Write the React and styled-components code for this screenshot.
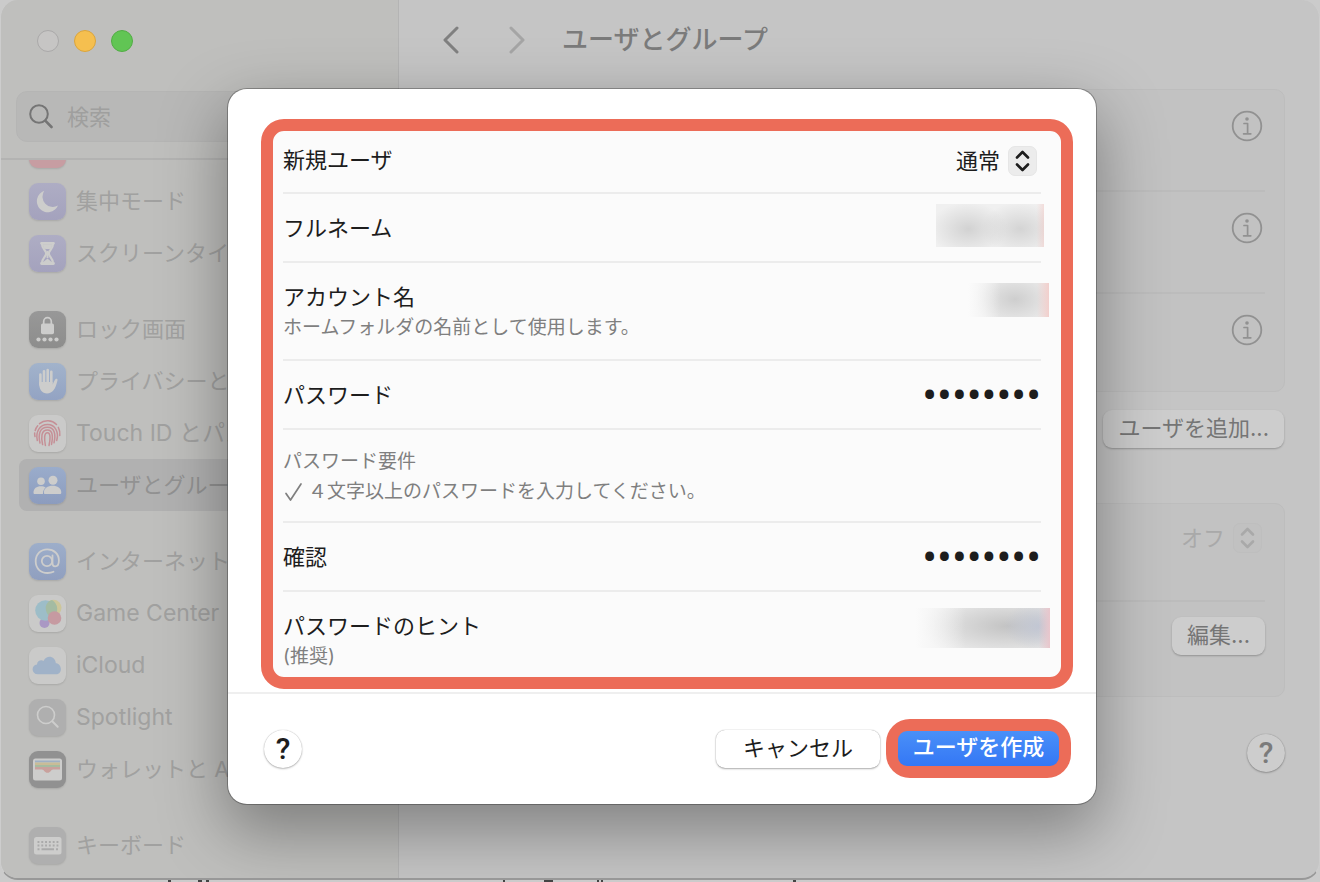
import { useState } from 'react';
import styled, { createGlobalStyle } from 'styled-components';

const GlobalStyle = createGlobalStyle`
    * {
        box-sizing: border-box;
    }

    body {
        margin: 0;
        background: #cbcbcb;
        font-family: Inter, "Noto Sans CJK JP", sans-serif;
        font-size: 22px;
    }

    button, input, select {
        font: inherit;
        color: inherit;
        margin: 0;
    }
`;

const Desktop = styled.div`
    height: 100vh;
    display: flex;
    flex-direction: column;
    overflow: hidden;
`;

const Window = styled.div`
    position: relative;
    flex: 1;
    min-height: 0;
    display: flex;
    border: 1px solid #b0b0b0;
    border-width: 0 1px 2px;
    border-color: #cdcdcd #cdcdcd #989898;
    border-radius: 18px;
    overflow: hidden;
    background: #c5c5c5;
`;

const PageBehind = styled.div`
    height: 2px;

    svg {
        display: block;
    }
`;

/* Sidebar */

const Sidebar = styled.aside`
    width: 398px;
    flex-shrink: 0;
    display: flex;
    flex-direction: column;
    background: #bfbfbd;
    border-right: 1px solid #b4b4b4;
`;

const SidebarTop = styled.div`
    padding: 30px 18px 16px 15px;
    border-bottom: 2px solid #b3b3b2;
`;

const Lights = styled.div`
    display: flex;
    gap: 15px;
    padding-left: 21px;
    margin-bottom: 39px;
`;

const Light = styled.button`
    width: 22px;
    height: 22px;
    padding: 0;
    border-radius: 50%;
    background: ${({ $fill }) => $fill};
    border: 1px solid ${({ $edge }) => $edge};
`;

const SearchBox = styled.label`
    display: flex;
    align-items: center;
    gap: 14px;
    height: 51px;
    padding: 0 12px;
    border: 1px solid #b5b5b4;
    border-radius: 11px;
    background: #b8b8b7;
    color: #757575;

    svg {
        flex-shrink: 0;
    }

    input {
        flex: 1;
        min-width: 0;
        padding: 0;
        border: 0;
        outline: 0;
        background: none;
    }

    input::placeholder {
        color: #9f9f9e;
        opacity: 1;
    }
`;

const SidebarScroll = styled.nav`
    flex: 1;
    min-height: 0;
    overflow: hidden;
    padding: 0 18px;
`;

const NavGroups = styled.div`
    display: flex;
    flex-direction: column;
    gap: 24px;
    margin-top: -37px;
`;

const NavGroup = styled.div`
    display: flex;
    flex-direction: column;
`;

const NavItem = styled.a`
    display: flex;
    align-items: center;
    gap: 10px;
    height: 52px;
    padding-left: 10px;
    border-radius: 8px;
    color: ${({ $selected }) => ($selected ? '#929292' : '#a1a1a0')};
    background: ${({ $selected }) => ($selected ? '#b1b1b1' : 'transparent')};
    text-decoration: none;
    white-space: nowrap;
    font-size: ${({ $latin }) => ($latin ? 23 : 22)}px;
    line-height: 32px;
`;

const Tile = styled.span`
    display: block;
    width: 37px;
    height: 37px;
    flex-shrink: 0;
    border-radius: 9px;
    background: ${({ $fill }) => $fill};
    box-shadow: 0 1px 2px rgba(0, 0, 0, 0.12);

    svg {
        display: block;
    }
`;

/* Settings pane behind the sheet */

const Pane = styled.main`
    flex: 1;
    min-width: 0;
    display: flex;
    flex-direction: column;
    padding: 0 34px 0 19px;
    color: #757575;
`;

const PaneHeader = styled.header`
    display: flex;
    align-items: center;
    height: 80px;
    padding-left: 20px;
    margin-bottom: 9px;
`;

const Arrows = styled.div`
    display: flex;
    gap: 43px;
    margin-right: 33px;
`;

const ArrowButton = styled.button`
    display: grid;
    place-items: center;
    width: 24px;
    height: 32px;
    padding: 0;
    border: 0;
    background: none;
    color: ${({ disabled }) => (disabled ? '#a5a5a5' : '#808080')};
`;

const PaneTitle = styled.h1`
    margin: 0;
    font-size: 26px;
    line-height: 36px;
    font-weight: 500;
    color: #7b7b7b;
`;

const Box = styled.section`
    padding: 0 19px;
    border: 1px solid #bdbdbd;
    border-radius: 10px;
    background: #c2c2c2;
`;

const BoxRow = styled.div`
    display: flex;
    justify-content: flex-end;
    align-items: flex-start;
    height: ${({ $height }) => $height}px;
    padding: ${({ $top }) => $top}px 0 0;

    & + & {
        border-top: 2px solid #bcbcbc;
    }
`;

const InfoButton = styled.button`
    display: block;
    padding: 0;
    margin-right: 2px;
    border: 0;
    background: none;
    color: #919191;

    svg {
        display: block;
    }
`;

const ButtonLine = styled.div`
    display: flex;
    justify-content: flex-end;
    padding: 18px 1px 55px 0;
`;

const DimButton = styled.button`
    height: 38px;
    padding: 0 15px 2px;
    border: 0;
    border-radius: 9px;
    background: #cdcdcd;
    box-shadow: 0 1px 2px rgba(0, 0, 0, 0.25);
    line-height: 34px;
    white-space: nowrap;
`;

const HelpButton = styled.button`
    width: 38px;
    height: 38px;
    padding: 0;
    border: 0;
    border-radius: 50%;
    background: ${({ $dim }) => ($dim ? '#cdcdcd' : '#fff')};
    color: ${({ $dim }) => ($dim ? '#7b7b7b' : '#1d1d1d')};
    box-shadow: 0 0 1px rgba(0, 0, 0, 0.3), 0 1px 2px rgba(0, 0, 0, 0.25);
    font-family: Roboto, sans-serif;
    font-size: 30px;
    font-weight: 500;
    line-height: 38px;
`;

const PaneHelp = styled.div`
    display: flex;
    justify-content: flex-end;
    padding-top: 37px;
`;

/* Pop-up select */

const PopUp = styled.span`
    position: relative;
    display: flex;
    align-items: center;
    margin-right: ${({ $dim }) => ($dim ? 3 : 4)}px;
    color: ${({ $dim }) => ($dim ? '#a9a9a9' : '#1d1d1d')};

    select {
        appearance: none;
        padding: 0 36px 0 0;
        border: 0;
        outline: 0;
        background: none;
        line-height: 32px;
        height: 32px;
        opacity: 1;
    }
`;

const PopUpArrows = styled.span`
    position: absolute;
    right: 0;
    display: grid;
    place-items: center;
    width: 29px;
    height: 30px;
    border: 1px solid ${({ $dim }) => ($dim ? '#bebebe' : '#e6e6e6')};
    border-radius: 7px;
    background: ${({ $dim }) => ($dim ? '#c1c1c1' : '#ececec')};
    pointer-events: none;
`;

/* Sheet */

const SheetLayer = styled.div`
    position: absolute;
    inset: 0;
    display: flex;
    padding: 89px 223px 74px 227px;
`;

const Sheet = styled.form`
    flex: 1;
    display: flex;
    flex-direction: column;
    border-radius: 19px;
    background: #fff;
    color: #1d1d1d;
    box-shadow: 0 0 0 1px rgba(0, 0, 0, 0.28), 0 24px 64px 4px rgba(0, 0, 0, 0.34);
`;

const SheetBody = styled.div`
    padding: 30px 23px 3px 33px;
    border-bottom: 2px solid #efefef;
`;

const Fields = styled.div`
    padding: 0 20px 0 10px;
    border: 12px solid #ec6c58;
    border-radius: 23px;
    background: #fbfbfb;
`;

const Field = styled.div`
    position: relative;
    display: flex;
    justify-content: space-between;
    padding: ${({ $pad }) => $pad || '19px 0 17px'};

    & + & {
        border-top: 2px solid #ececec;
    }
`;

const FieldText = styled.div`
    display: flex;
    flex-direction: column;
    flex-shrink: 0;

    label {
        line-height: 31px;
    }
`;

const Hint = styled.span`
    display: flex;
    align-items: center;
    gap: 5px;
    font-size: 19px;
    line-height: 30px;
    color: #7f7f7f;
`;

const TextInput = styled.input`
    width: 240px;
    height: 31px;
    padding: 0;
    border: 0;
    outline: 0;
    background: none;
    text-align: right;
`;

const PasswordInput = styled(TextInput)`
    font-family: Roboto, sans-serif;
    font-size: 44px;
    line-height: 31px;
`;

const Smudge = styled.span`
    position: absolute;
    top: ${({ $top }) => $top}px;
    right: ${({ $right }) => $right}px;
    width: ${({ $width }) => $width}px;
    height: ${({ $height }) => $height}px;
    background: ${({ $fill }) => $fill};
    pointer-events: none;
`;

const SheetFooter = styled.div`
    flex: 1;
    display: flex;
    align-items: flex-start;
    padding: 25px 25px 0 36px;

    ${HelpButton} {
        margin: 11px auto 0 0;
    }
`;

const CancelButton = styled.button`
    width: 164px;
    height: 38px;
    margin: 11px 6px 0 0;
    padding: 0 0 2px;
    border: 0;
    border-radius: 9px;
    background: #fff;
    box-shadow: 0 0 1px rgba(0, 0, 0, 0.4), 0 1px 2px rgba(0, 0, 0, 0.3);
    line-height: 34px;
`;

const CreateRing = styled.div`
    padding: 12px;
    border-radius: 24px;
    background: #ec6c58;
`;

const CreateButton = styled.button`
    display: block;
    width: 161px;
    height: 35px;
    padding: 0 0 2px;
    border: 0;
    border-radius: 9px;
    background: linear-gradient(#4a90f8, #3477f5);
    color: #fff;
    font-weight: 500;
    line-height: 33px;
`;

/* Icons */

const ArrowsIcon = () => (
    <svg width="15" height="22" viewBox="0 0 15 22" fill="none" stroke="currentColor" strokeWidth="2.6" strokeLinecap="round" strokeLinejoin="round">
        <path d="M2 7.5 7.5 2 13 7.5M2 14.5 7.5 20 13 14.5" />
    </svg>
);

const InfoIcon = () => (
    <svg width="32" height="32" viewBox="0 0 32 32" fill="none" stroke="currentColor">
        <circle cx="16" cy="16" r="14.3" strokeWidth="1.8" />
        <circle cx="16" cy="9" r="1.8" fill="currentColor" stroke="none" />
        <path d="M13 13.5h3.6v10M12.6 23.8h7.2" strokeWidth="1.7" strokeLinecap="round" strokeLinejoin="round" />
    </svg>
);

const CheckIcon = () => (
    <svg width="20" height="20" viewBox="0 0 20 20" fill="none" stroke="currentColor" strokeWidth="1.7" strokeLinecap="round" strokeLinejoin="round">
        <path d="M3 11.5 7.5 18 18 2" />
    </svg>
);

const Glyph = ({ children }) => (
    <svg width="37" height="37" viewBox="0 0 37 37" fill="#cdcdcc">
        {children}
    </svg>
);

const icons = {
    sound: {
        fill: '#c79da2',
        glyph: <path d="M8 15h5l6-5v17l-6-5H8zM23 13q4 5.500 0 11v-2q2-3.500 0-7z" />
    },
    moon: {
        fill: 'linear-gradient(#aeadc4, #a4a2bd)',
        glyph: <path d="M15.300 7.800A11 11 0 1 0 29 22.500 10.300 10.300 0 0 1 15.300 7.800Z" />
    },
    hourglass: {
        fill: 'linear-gradient(#aeadc4, #a4a2bd)',
        glyph: (
            <g fill="none" stroke="#cdcdcc">
                <path d="M12.500 8.300h12M12.500 28.500h12" strokeWidth="2.800" strokeLinecap="round" />
                <path d="M13 9c0 5.500 4.200 6.200 4.200 9.400S13 23 13 28M24 9c0 5.500-4.200 6.200-4.200 9.400S24 23 24 28" strokeWidth="2.200" />
                <path d="M14 9.500h9c0 2.500-.7 3.500-1.500 4.200-2 .5-3.500.5-6 0-.8-.7-1.500-1.700-1.500-4.200ZM14 28c.4-2 2.800-2.800 4.500-4.500 1.700 1.700 4.100 2.500 4.500 4.500Z" fill="#cdcdcc" stroke="none" />
                <path d="M18.500 16v7" strokeWidth="1.800" />
            </g>
        )
    },
    lock: {
        fill: 'linear-gradient(#989898, #8d8d8c)',
        glyph: (
            <>
                <rect x="12" y="12.500" width="13" height="10.800" rx="1.800" />
                <path d="M14.700 13v-2.500a3.800 3.800 0 0 1 7.600 0V13" fill="none" stroke="#cdcdcc" strokeWidth="1.700" />
                <circle cx="9.500" cy="28.500" r="2.100" />
                <circle cx="15.500" cy="28.500" r="2.100" />
                <circle cx="21.500" cy="28.500" r="2.100" />
                <circle cx="27.500" cy="28.500" r="2.100" />
            </>
        )
    },
    hand: {
        fill: 'linear-gradient(#a2b3cb, #93a3c3)',
        glyph: (
            <>
                <g fill="none" stroke="#cdcdcc" strokeWidth="2.600" strokeLinecap="round">
                    <path d="M11.400 11.500v10M15 8.200V20M18.700 7V20M22.300 8.800V20" />
                </g>
                <path d="M10.100 19h13.500v2.600c1-2.300 2-4.700 3-5.600.9-.7 2.200-.2 1.900 1.200-.8 3.800-2 7.500-4 10-2.700 4-9.500 4.400-12.500.2-1.600-2.400-1.900-5-1.900-8.400Z" />
            </>
        )
    },
    touch: {
        fill: '#cacac9',
        glyph: (
            <g fill="none" stroke="#c58f96" strokeWidth="1.500" strokeLinecap="round">
                <path d="M10.500 8.700a12.800 12.800 0 0 1 17 .8M6.200 15.500a12.400 12.400 0 0 1 2.500-4.700M29.300 12.300a14 14 0 0 1 1.500 8.200M6 21.500q-.5-1.800-.3-3.500" />
                <path d="M8.300 25.500C6.300 16.500 11 9.600 18.500 9.600c8 0 11.500 7.800 9.200 15.900" />
                <path d="M11 28c-2-8.500-.5-15.700 7.500-15.700 7 0 8.500 7 6.500 15.500" />
                <path d="M13.600 29.600c-1.500-6.500-1.800-14.600 4.900-14.600 5.500 0 5.500 7 4 14.400" />
                <path d="M16.400 30.500c-1-6-1.700-12.800 2.100-12.800 3.500 0 2.700 7 1.500 12.800" />
            </g>
        )
    },
    users: {
        fill: 'linear-gradient(#9aaccb, #8c9cbe)',
        glyph: (
            <>
                <circle cx="12" cy="14.300" r="3.800" />
                <path d="M4.500 25.800c0-4.500 3-6.600 7.400-6.600 2 0 3.600.4 4.800 1.300-1.700 1.300-2.700 3.200-2.800 6.600H5.700c-.8 0-1.200-.5-1.200-1.300Z" />
                <circle cx="24" cy="13.300" r="4.500" />
                <path d="M14.900 25.600c0-4.600 3.900-6.800 8.700-6.800s8.700 2.200 8.700 6.800c0 1-.5 1.500-1.400 1.500H16.300c-.9 0-1.400-.5-1.400-1.500Z" />
            </>
        )
    },
    at: {
        fill: 'linear-gradient(#9daeca, #909fbf)',
        glyph: (
            <g fill="none" stroke="#cdcdcc" strokeWidth="1.800" strokeLinecap="round">
                <circle cx="18" cy="18" r="5.200" />
                <path d="M23.500 12.500v7.700c0 2 1 3.200 2.600 3.200 2.200 0 3.800-2.200 3.800-5.900 0-6.600-4.900-11.100-11.600-11.100S6.700 11.200 6.700 18.300 11.500 30 18.600 30c2.200 0 4.200-.4 5.900-1.200" />
            </g>
        )
    },
    game: {
        fill: '#cacac9',
        glyph: (
            <>
                <circle cx="15.500" cy="28" r="5" fill="#aa98c4" />
                <circle cx="24.500" cy="12.800" r="8" fill="#cdc69a" />
                <circle cx="16.500" cy="15.500" r="10.300" fill="#9dbdc8" />
                <path d="M17 15.500a8 8 0 0 1 6-10.400 10.300 10.300 0 0 1 1.500 16.900 8 8 0 0 1-7.500-6.500Z" fill="#a4bba2" />
                <circle cx="25.500" cy="23" r="6.800" fill="#c69aa1" />
            </>
        )
    },
    cloud: {
        fill: '#cacac9',
        glyph: <path d="M9 27.300c-7 0-7-9.300-1-9.800.2-4 4.500-5 6.500-3.500 3.500-7 12-4.500 12.300 2.200 6 0 7.500 11.100.2 11.100Z" fill="#a0b2c8" />
    },
    spotlight: {
        fill: '#afafaf',
        glyph: (
            <g fill="none" stroke="#cdcdcc" strokeLinecap="round">
                <circle cx="17" cy="16" r="8.500" strokeWidth="1.600" />
                <path d="m23.500 22.500 5.200 5.300" strokeWidth="2" />
            </g>
        )
    },
    wallet: {
        fill: '#919191',
        glyph: (
            <>
                <rect x="4" y="7.500" width="29" height="22" rx="2.500" />
                <path d="M6 9.500h25v2H6z" fill="#9fb0c4" />
                <path d="M6 11.500h25v2.500H6z" fill="#c9bc97" />
                <path d="M6 14h25v2H6z" fill="#a6bba0" />
                <path d="M6 16h25v2.500h-7c-2 0-2.500 3.300-5.500 3.300s-3.500-3.300-5.500-3.300H6z" fill="#c9a19d" />
            </>
        )
    },
    keyboard: {
        fill: '#afafaf',
        glyph: (
            <>
                <rect x="5" y="10" width="27.500" height="17.500" rx="2.500" />
                <path d="M8.500 15h21M8.500 18.500h21" stroke="#aaa" strokeWidth="1.900" strokeDasharray="1.900 1.900" />
                <path d="M8.500 22.300h2M12.500 22.300h12.500M27 22.300h2" stroke="#aaa" strokeWidth="1.900" />
            </>
        )
    },
    blank: { fill: '#afafaf', glyph: null }
};

const groups = [
    [
        { icon: 'sound', label: 'サウンド' },
        { icon: 'moon', label: '集中モード' },
        { icon: 'hourglass', label: 'スクリーンタイム' }
    ],
    [
        { icon: 'lock', label: 'ロック画面' },
        { icon: 'hand', label: 'プライバシーとセキュリティ' },
        { icon: 'touch', label: 'Touch ID とパスワード', latin: true },
        { icon: 'users', label: 'ユーザとグループ' }
    ],
    [
        { icon: 'at', label: 'インターネットアカウント' },
        { icon: 'game', label: 'Game Center', latin: true },
        { icon: 'cloud', label: 'iCloud', latin: true },
        { icon: 'spotlight', label: 'Spotlight', latin: true },
        { icon: 'wallet', label: 'ウォレットと Apple Pay' }
    ],
    [
        { icon: 'keyboard', label: 'キーボード' },
        { icon: 'blank', label: '' }
    ]
];

const smudges = {
    name: 'linear-gradient(90deg, transparent 93%, rgba(245, 190, 185, 0.4)), radial-gradient(ellipse 36% 62% at 30% 58%, #d2d2d2, transparent), radial-gradient(ellipse 36% 62% at 78% 58%, #d4d4d4, transparent), #f0f0f0',
    account: 'linear-gradient(90deg, #fbfbfb, transparent 40%, transparent 85%, #f2cfcc), radial-gradient(ellipse 52% 80% at 58% 48%, #cecece, #ececec)',
    hint: 'linear-gradient(90deg, #fbfbfb 4%, transparent 40%, transparent 92%, #e9c6cc), radial-gradient(ellipse 25% 60% at 92% 45%, rgba(190, 196, 212, 0.8), transparent), radial-gradient(ellipse 65% 80% at 70% 45%, #c3c3c3, #ededed)'
};

const App = () => {
    const [kind, setKind] = useState('通常');
    const [password, setPassword] = useState('password');
    const [verify, setVerify] = useState('password');

    return (
        <Desktop>
            <GlobalStyle />
            <Window>
                <Sidebar>
                    <SidebarTop>
                        <Lights>
                            <Light type="button" aria-label="閉じる" $fill="#c6c5c4" $edge="#aaa9a9" />
                            <Light type="button" aria-label="しまう" $fill="#f5bf4f" $edge="#dba53c" />
                            <Light type="button" aria-label="拡大" $fill="#61c554" $edge="#52ad45" />
                        </Lights>
                        <SearchBox>
                            <svg width="24" height="25" viewBox="0 0 24 25" fill="none" stroke="currentColor" strokeLinecap="round">
                                <circle cx="10" cy="10" r="8.800" strokeWidth="2" />
                                <path d="m16.500 16.800 6 6.200" strokeWidth="2.600" />
                            </svg>
                            <input type="text" placeholder="検索" aria-label="検索" />
                        </SearchBox>
                    </SidebarTop>
                    <SidebarScroll>
                        <NavGroups>
                            {groups.map((group, i) => (
                                <NavGroup key={i}>
                                    {group.map(({ icon, label, latin }) => (
                                        <NavItem key={icon} href="#" $selected={icon === 'users'} $latin={latin}>
                                            <Tile $fill={icons[icon].fill}>
                                                <Glyph>{icons[icon].glyph}</Glyph>
                                            </Tile>
                                            {label}
                                        </NavItem>
                                    ))}
                                </NavGroup>
                            ))}
                        </NavGroups>
                    </SidebarScroll>
                </Sidebar>

                <Pane>
                    <PaneHeader>
                        <Arrows>
                            <ArrowButton type="button" aria-label="戻る">
                                <svg width="17" height="28" viewBox="0 0 17 28" fill="none" stroke="currentColor" strokeWidth="3" strokeLinecap="round" strokeLinejoin="round">
                                    <path d="M15 2 3 14l12 12" />
                                </svg>
                            </ArrowButton>
                            <ArrowButton type="button" aria-label="進む" disabled>
                                <svg width="17" height="28" viewBox="0 0 17 28" fill="none" stroke="currentColor" strokeWidth="3" strokeLinecap="round" strokeLinejoin="round">
                                    <path d="m2 2 12 12L2 26" />
                                </svg>
                            </ArrowButton>
                        </Arrows>
                        <PaneTitle>ユーザとグループ</PaneTitle>
                    </PaneHeader>
                    <Box>
                        {[100, 102, 99].map((height, i) => (
                            <BoxRow key={i} $height={height} $top={20}>
                                <InfoButton type="button" aria-label="情報">
                                    <InfoIcon />
                                </InfoButton>
                            </BoxRow>
                        ))}
                    </Box>
                    <ButtonLine>
                        <DimButton type="button">ユーザを追加...</DimButton>
                    </ButtonLine>
                    <Box>
                        <BoxRow $height={96} $top={18}>
                            <PopUp $dim>
                                <select aria-label="自動ログイン">
                                    <option>オフ</option>
                                </select>
                                <PopUpArrows $dim>
                                    <ArrowsIcon />
                                </PopUpArrows>
                            </PopUp>
                        </BoxRow>
                        <BoxRow $height={96} $top={15}>
                            <DimButton type="button">編集...</DimButton>
                        </BoxRow>
                    </Box>
                    <PaneHelp>
                        <HelpButton type="button" $dim>?</HelpButton>
                    </PaneHelp>
                </Pane>

                <SheetLayer>
                    <Sheet onSubmit={(e) => e.preventDefault()}>
                        <SheetBody>
                            <Fields>
                                <Field $pad="14px 0 15px">
                                    <FieldText>
                                        <label htmlFor="kind">新規ユーザ</label>
                                    </FieldText>
                                    <PopUp>
                                        <select id="kind" value={kind} onChange={(e) => setKind(e.target.value)}>
                                            <option>通常</option>
                                        </select>
                                        <PopUpArrows>
                                            <ArrowsIcon />
                                        </PopUpArrows>
                                    </PopUp>
                                </Field>
                                <Field>
                                    <FieldText>
                                        <label htmlFor="fullname">フルネーム</label>
                                    </FieldText>
                                    <TextInput id="fullname" type="text" />
                                    <Smudge $top={10} $right={-3} $width={108} $height={43} $fill={smudges.name} />
                                </Field>
                                <Field $pad="19px 0 16px">
                                    <FieldText>
                                        <label htmlFor="account">アカウント名</label>
                                        <Hint>ホームフォルダの名前として使用します。</Hint>
                                    </FieldText>
                                    <TextInput id="account" type="text" />
                                    <Smudge $top={20} $right={-8} $width={81} $height={34} $fill={smudges.account} />
                                </Field>
                                <Field>
                                    <FieldText>
                                        <label htmlFor="password">パスワード</label>
                                    </FieldText>
                                    <PasswordInput id="password" type="password" value={password} onChange={(e) => setPassword(e.target.value)} />
                                </Field>
                                <Field $pad="17px 0 14px">
                                    <FieldText>
                                        <Hint>パスワード要件</Hint>
                                        <Hint>
                                            <CheckIcon />
                                            ４文字以上のパスワードを入力してください。
                                        </Hint>
                                    </FieldText>
                                </Field>
                                <Field>
                                    <FieldText>
                                        <label htmlFor="verify">確認</label>
                                    </FieldText>
                                    <PasswordInput id="verify" type="password" value={verify} onChange={(e) => setVerify(e.target.value)} />
                                </Field>
                                <Field $pad="19px 0 5px">
                                    <FieldText>
                                        <label htmlFor="hint">パスワードのヒント</label>
                                        <Hint>(推奨)</Hint>
                                    </FieldText>
                                    <TextInput id="hint" type="text" />
                                    <Smudge $top={16} $right={-9} $width={141} $height={40} $fill={smudges.hint} />
                                </Field>
                            </Fields>
                        </SheetBody>
                        <SheetFooter>
                            <HelpButton type="button">?</HelpButton>
                            <CancelButton type="button">キャンセル</CancelButton>
                            <CreateRing>
                                <CreateButton type="submit">ユーザを作成</CreateButton>
                            </CreateRing>
                        </SheetFooter>
                    </Sheet>
                </SheetLayer>
            </Window>
            <PageBehind>
                <svg width="860" height="2" viewBox="0 0 860 2" stroke="#444" strokeWidth="2">
                    <path d="M168 1h3M198 1h4M206 1h3M503 1h2M544 1h9M597 1h2M601 1h2M793 1h3" />
                </svg>
            </PageBehind>
        </Desktop>
    );
};

export default App;
